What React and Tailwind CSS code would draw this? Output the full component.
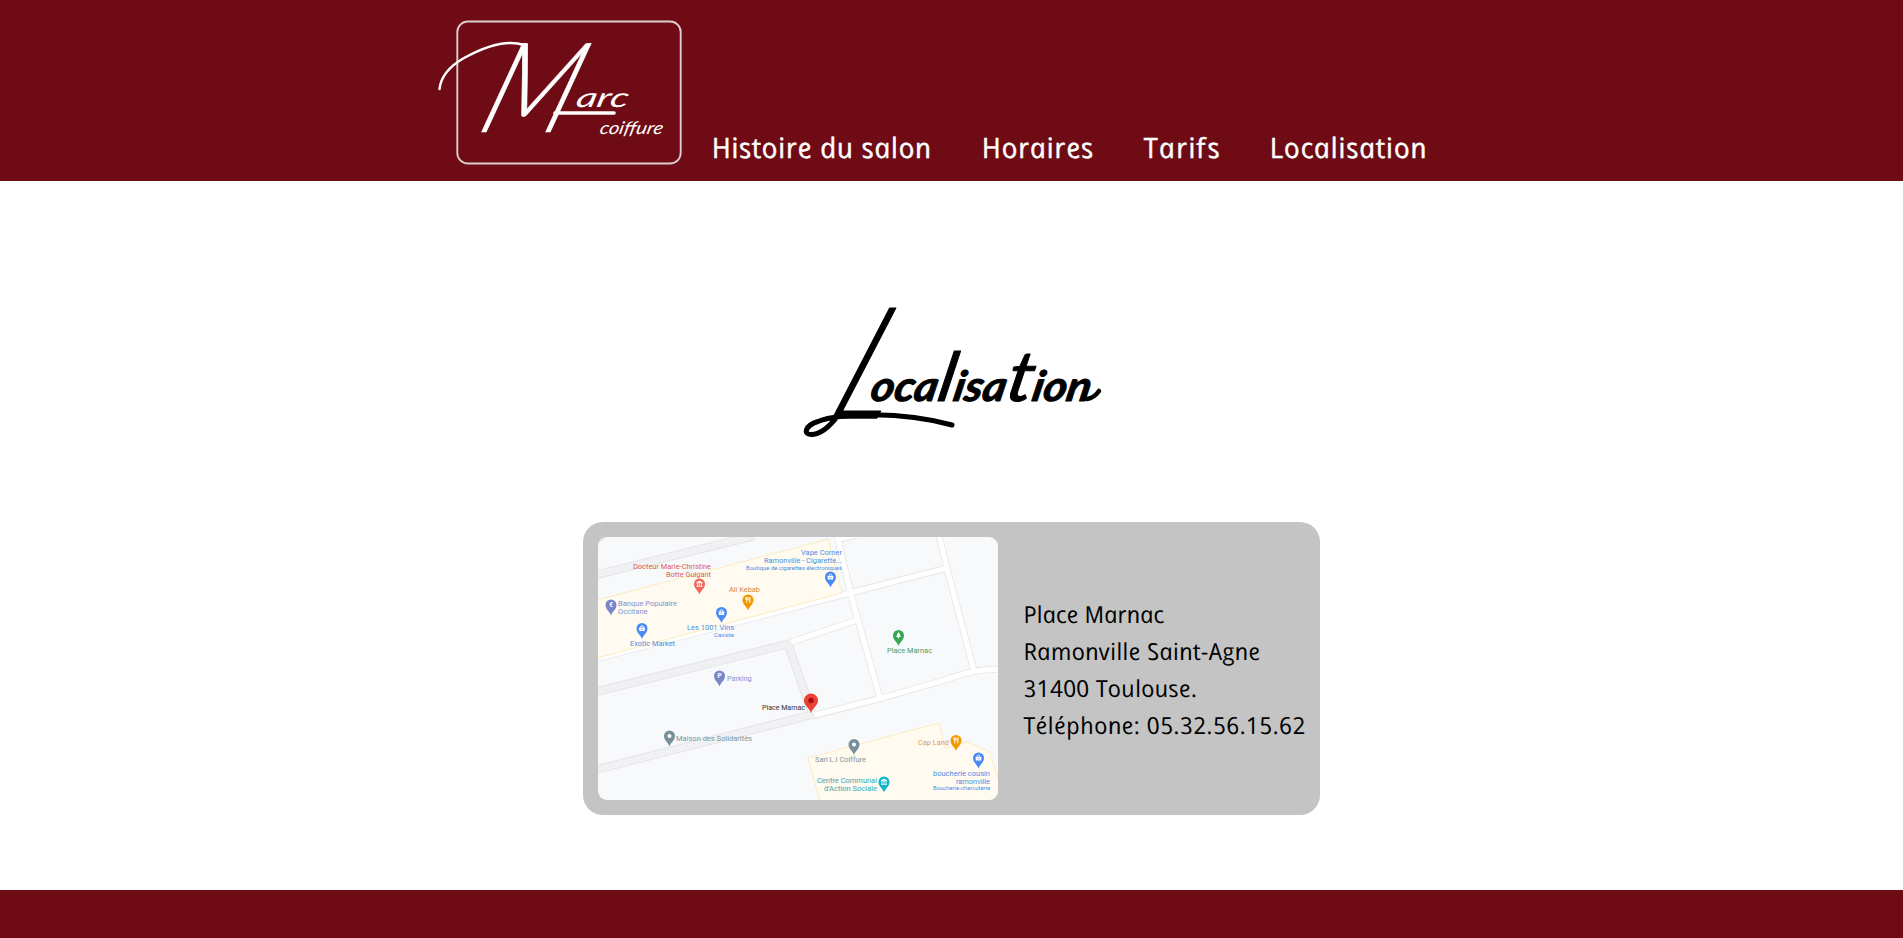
const pins = [
  ['#ee675c', 101.5, 47, 'museum'], ['#f29900', 150, 63, 'food'], ['#7986cb', 13, 68, 'bank'],
  ['#4a8af4', 44, 91.5, 'shop'], ['#4a8af4', 123.5, 75.5, 'shop'], ['#4a8af4', 232.5, 40, 'shop'],
  ['#34a853', 300.5, 98.5, 'tree'], ['#7986cb', 121.5, 139, 'parking'], ['#78909c', 71.5, 199, 'dot'],
  ['#78909c', 256, 207.5, 'dot'], ['#12b5cb', 286, 245, 'museum'], ['#f29900', 358, 203.5, 'food'],
  ['#4a8af4', 380.5, 221, 'shop'],
];

const labels = [
  ['Docteur Marie-Christine', 35, 32, 78, 7.6, '#dc5a54'],
  ['Botte Guigant', 68, 40, 45, 7.6, '#dc5a54'],
  ['Ali Kebab', 131, 55, 31, 7.6, '#d88a45'],
  ['Banque Populaire', 20, 69, 59, 7.6, '#8790cf'],
  ['Occitane', 20, 77, 29.5, 7.6, '#8790cf'],
  ['Les 1001 Vins', 89, 93, 47, 7.6, '#4c8de6'],
  ['Caviste', 116, 100, 20, 5.8, '#4c8de6'],
  ['Exotic Market', 32, 109, 45, 7.6, '#4c8de6'],
  ['Vape Corner', 203, 18, 41, 7.6, '#4c8de6'],
  ['Ramonville - Cigarette...', 166, 26, 78, 7.6, '#4c8de6'],
  ['Boutique de cigarettes électroniques', 148, 32.5, 96, 5.8, '#4c8de6'],
  ['Place Marnac', 289, 116, 45, 7.6, '#4a9f68'],
  ['Parking', 129, 144, 24.5, 7.6, '#8790cf'],
  ['Maison des Solidarités', 78, 204, 76, 7.6, '#7f959d'],
  ['Place Marnac', 164, 173, 43, 7.2, '#333333'],
  ['Sarl L.I Coiffure', 217, 225, 51, 7.6, '#7f959d'],
  ['Centre Communal', 219, 246, 60, 7.6, '#3aa6b0'],
  ["d'Action Sociale", 226, 254, 53, 7.6, '#3aa6b0'],
  ['Cap Land', 320, 208, 31, 7.6, '#dc9a55'],
  ['boucherie cousin', 335, 239, 57, 7.6, '#4c8de6'],
  ['ramonville', 358, 247, 34, 7.6, '#4c8de6'],
  ['Boucherie-charcuterie', 335, 253, 57, 5.8, '#4c8de6'],
];

function PinGlyph({ kind, color }) {
  if (kind === 'dot') return <circle r="2" fill="#fff" />;
  if (kind === 'food')
    return <path d="M-2.2 -3v2.4h2v-2.4M-1.2 -3v6M1.9 3v-6q-1.4 1-1 3.4h1" fill="none" stroke="#fff" strokeWidth=".9" />;
  if (kind === 'shop')
    return (
      <g>
        <path d="M-3 -.9h6l-.4 3.5h-5.2z" fill="#fff" />
        <path d="M-1.5 -.9q0-2 1.5-2t1.5 2" fill="none" stroke="#fff" strokeWidth=".9" />
        <path d="M-1.1 .5q1.1 1.2 2.2 0" fill="none" stroke={color} strokeWidth=".7" />
      </g>
    );
  if (kind === 'museum')
    return <path d="M-3 -1.2L0 -3 3 -1.2ZM-2 -.8V2M0 -.8V2M2 -.8V2M-3 2.4H3" fill="#fff" stroke="#fff" strokeWidth=".8" />;
  if (kind === 'tree') return <path d="M0 -3.4L2 -.6H1.1L2.6 1.6H.5V3h-1V1.6h-2.1L-1.1 -.6H-2Z" fill="#fff" />;
  return (
    <text textAnchor="middle" y="2.3" fill="#fff" fontSize="6.5" fontWeight="700" fontFamily="Roboto, sans-serif">
      {kind === 'bank' ? '€' : 'P'}
    </text>
  );
}

function StreetMap() {
  return (
    <svg className="block h-[263px] w-[400px] shrink-0 rounded-[9px]" viewBox="0 0 400 263">
      <rect width="400" height="263" fill="#f8f9fb" />
      <g fill="none" stroke="#e2e3e5">
        <g strokeWidth="8.5">
          <path d="M-3 38L156 -1M-3 155L190 107L214 176M-3 233L217 177" />
          <path d="M-2 5L9 -2" strokeWidth="4" />
        </g>
        <g strokeWidth="7" stroke="#e6e7e9">
          <path d="M-3 122L244 58L349 31M239 -2L253 58L282 161M341 -2L349 31L376 134M214 179L284 161L350 142Q375 132 403 132M193 105L259 83M242 2L259 -2" />
        </g>
      </g>
      <g fill="none" stroke="#f0f1f3" strokeWidth="6.8">
        <path d="M-3 38L156 -1M-3 155L190 107L214 176M-3 233L217 177" />
        <path d="M-2 5L9 -2" strokeWidth="2.4" />
      </g>
      <path d="M-3 122L244 58L349 31M239 -2L253 58L282 161M341 -2L349 31L376 134M217 178L284 161L350 142Q375 132 403 132M193 105L259 83M242 2L259 -2" fill="none" stroke="#fff" strokeWidth="5.3" />
      <path d="M-1 63L197 11L230 2L244 56L187 71L-1 121ZM210 221L341 186L347 211L370 205L392 215L401 246V264H222Z" fill="#fffbf0" stroke="#fde9b8" strokeWidth=".9" />
      {labels.map(([t, x, y, w, s, c], i) => (
        <text key={i} x={x} y={y} textLength={w} lengthAdjust="spacingAndGlyphs" fontSize={s} fill={c} fontFamily="Roboto, sans-serif">
          {t}
        </text>
      ))}
      {pins.map(([c, x, y, k], i) => (
        <g key={i} transform={`translate(${x} ${y})`}>
          <path d="M0 10.6C-.9 6.6-5.5 4.8-5.5 0a5.5 5.5 0 0 1 11 0C5.5 4.8 .9 6.6 0 10.6Z" fill={c} />
          <PinGlyph kind={k} color={c} />
        </g>
      ))}
      <path d="M213 176.5C212 171 206 169 206 163.5a7 7 0 0 1 14 0C220 169 214 171 213 176.5Z" fill="#ea4335" />
      <circle cx="213" cy="163.5" r="2.7" fill="#a50e0e" />
    </svg>
  );
}

function Logo() {
  return (
    <svg className="block h-[181px] w-[250px] shrink-0" viewBox="438 0 250 181" fill="#fff" fontFamily="Lato, sans-serif" fontStyle="italic">
      <rect x="457.3" y="21.5" width="223.4" height="142" rx="10.5" fill="none" stroke="#dccdce" strokeWidth="1.9" />
      <path d="M439.5 89C441 76 450 66 464 58C484 47 506 39 524 45" fill="none" stroke="#fff" strokeWidth="2.5" strokeLinecap="round" />
      <text transform="matrix(.95 0 -.4 1.12 475 132)" fontSize="112" fontWeight="300" stroke="#fff" strokeWidth=".6" strokeLinejoin="round">M</text>
      <path d="M555 113H614" stroke="#fff" strokeWidth="3.6" strokeLinecap="round" />
      <text transform="matrix(1 0 -.22 1 575 106.5)" fontSize="27" textLength="52" lengthAdjust="spacingAndGlyphs">arc</text>
      <text transform="matrix(1 0 -.22 1 599 134)" fontSize="17.5" textLength="63" lengthAdjust="spacingAndGlyphs">coiffure</text>
    </svg>
  );
}

function ScriptHeading() {
  return (
    <h1 className="ml-[7px]">
      <svg className="block h-[230px] w-[330px]" viewBox="790 220 330 230" fontFamily="Lato, sans-serif" fontStyle="italic" stroke="#000" strokeLinejoin="round">
        <text transform="matrix(.8 0 -.42 1 825 417.5)" fontSize="155" fontWeight="300" strokeWidth="1.6">L</text>
        <path d="M839 414C829 428 820 434.5 811 434.5C803 434.5 805 425.5 818 421.5C840 413 900 411 952 425" fill="none" strokeWidth="5" strokeLinecap="round" />
        <text transform="matrix(1 0 -.2 1 869 401)" fontSize="42" fontWeight="700" strokeWidth="1" textLength="220" lengthAdjust="spacingAndGlyphs">
          oca<tspan fontSize="68" fontWeight="400">l</tspan>isa<tspan fontSize="70" fontWeight="400">t</tspan>ion
        </text>
        <path d="M1087 399Q1094 398 1099 391" fill="none" strokeWidth="4.5" strokeLinecap="round" />
      </svg>
    </h1>
  );
}

export default function App() {
  return (
    <div className="flex h-[938px] flex-col overflow-hidden bg-white font-['Open_Sans',sans-serif]">
      <header className="h-[181px] shrink-0 bg-[#6e0b14]">
        <div className="mx-auto flex h-full w-[1027px] items-end">
          <Logo />
          <nav className="ml-[23px] flex gap-[50px] pb-[15px] text-[28px] leading-[38px] whitespace-nowrap text-white italic [-webkit-text-stroke:0.4px_#fff]">
            <a className="w-[220px] skew-x-12 tracking-[0.65px]">Histoire du salon</a>
            <a className="w-[112px] skew-x-12 tracking-[0.8px]">Horaires</a>
            <a className="w-[76px] skew-x-12 tracking-[1.3px]">
              Tari<span className="inline-block -skew-x-12 not-italic">f</span>s
            </a>
            <a className="w-[156px] skew-x-12 tracking-[0.8px]">Localisation</a>
          </nav>
        </div>
      </header>
      <main className="flex flex-1 flex-col items-center pt-[39px]">
        <ScriptHeading />
        <section className="mt-[72px] flex h-[293px] w-[737px] items-center rounded-[20px] bg-[#c4c4c4] pl-[15px]">
          <StreetMap />
          <address className="ml-[25px] flex flex-col items-start pt-[2px] text-[23.5px] leading-[37px] whitespace-nowrap text-black italic">
            <span className="skew-x-12">Place Marnac</span>
            <span className="skew-x-12 tracking-[0.3px]">Ramonville Saint-Agne</span>
            <span className="skew-x-12 tracking-[0.25px]">31400 Toulouse.</span>
            <span className="skew-x-12 tracking-[0.42px]">Téléphone: 05.32.56.15.62</span>
          </address>
        </section>
      </main>
      <footer className="h-12 shrink-0 bg-[#6e0b14]" />
    </div>
  );
}
